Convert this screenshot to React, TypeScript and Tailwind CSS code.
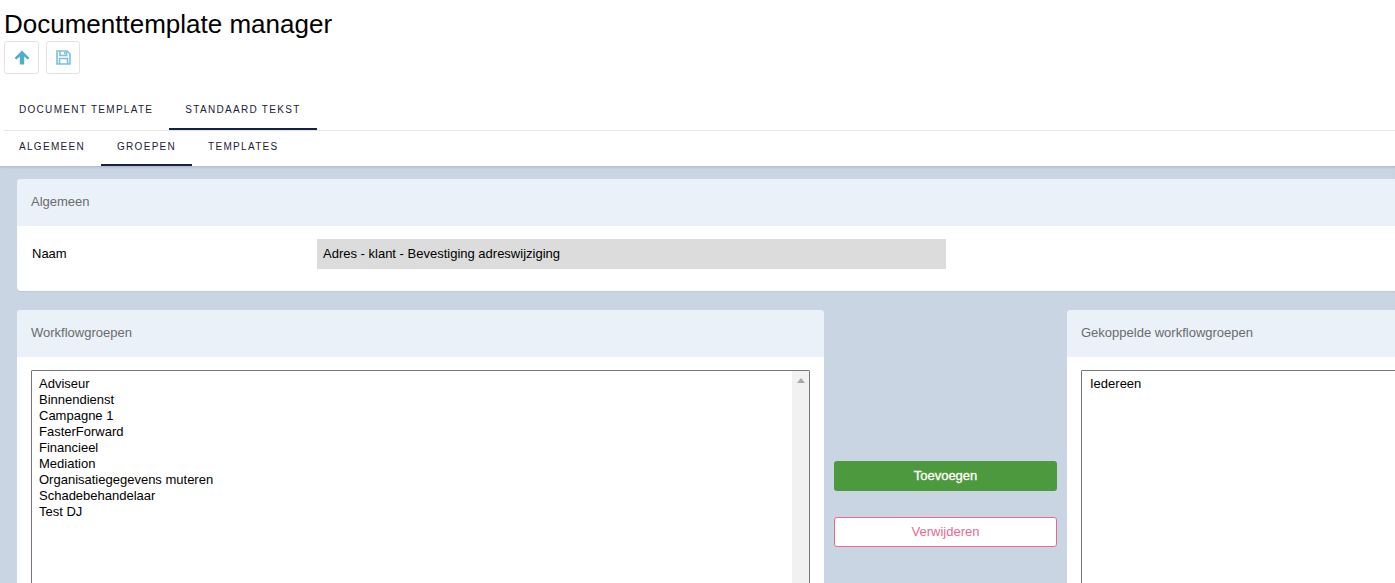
import React from "react";

const groups = ["Adviseur","Binnendienst","Campagne 1","FasterForward","Financieel","Mediation","Organisatiegegevens muteren","Schadebehandelaar","Test DJ"];

function Tab({ label, active, top }: { label: string; active?: boolean; top?: boolean }) {
  return (
    <div className={"flex h-full items-center px-4 text-[10px] tracking-[1.3px] text-[#1a2238] border-b-2 " + (top ? "pt-[1px] " : "pb-[3px] ") + (active ? "border-[#14233f]" : "border-transparent")}>
      {label}
    </div>
  );
}

function PanelHeader({ title }: { title: string }) {
  return (
    <div className="flex h-[47px] items-center rounded-t-[4px] bg-[#eaf1f9] pb-[2px] pl-[14px] text-[13px] text-[#6b6b6b]">{title}</div>
  );
}

export default function App() {
  return (
    <div className="flex h-[583px] w-[1395px] flex-col overflow-hidden bg-white font-['Liberation_Sans',Arial,sans-serif] text-black">
      <div className="h-[90px] shrink-0 pl-[4px]">
        <h1 className="pt-[9px] text-[26px] leading-[30px]">Documenttemplate manager</h1>
        <div className="mt-[2px] flex gap-[7px]">
          <button className="flex h-[33px] w-[35px] items-center justify-center rounded-[3px] border border-[#e3e3e3]">
            <svg width="16" height="15" viewBox="0 0 16 15"><path d="M8 0.5 L15.5 8 L13.5 9.6 L10.2 6.6 L10.2 14.5 L5.8 14.5 L5.8 6.6 L2.5 9.6 L0.5 8 Z" fill="#4fadd0" /></svg>
          </button>
          <button className="flex h-[33px] w-[34px] items-center justify-center rounded-[3px] border border-[#e3e3e3]">
            <svg width="15" height="15" viewBox="0 0 15 15" fill="none" stroke="#7cc0dd" strokeWidth="1.6"><path d="M1 1 H11 L14 4 V14 H1 Z" /><path d="M4 1 V5.5 H10.5 V1" /><path d="M3.5 14 V8.5 H11.5 V14" /><rect x="8" y="2" width="1.4" height="2.4" fill="#7cc0dd" stroke="none" /></svg>
          </button>
        </div>
      </div>
      <div className="ml-[4px] flex h-[41px] shrink-0 border-b border-[#e6e6e6]">
        <div className="-ml-[1px] flex h-full"><Tab top label="DOCUMENT TEMPLATE" /><Tab top label="STANDAARD TEKST" active /></div>
      </div>
      <div className="ml-[4px] flex h-[35px] shrink-0">
        <div className="-ml-[1px] flex h-full"><Tab label="ALGEMEEN" /><Tab label="GROEPEN" active /><Tab label="TEMPLATES" /></div>
      </div>
      <div className="min-h-0 flex-1 bg-[#c9d5e3] pl-[17px] pt-[13px] shadow-[inset_0_3px_3px_-2px_rgba(0,0,0,0.15)]">
        <div className="w-[1400px] rounded-[4px] bg-white shadow-[0_1px_1px_rgba(0,0,0,0.06)]">
          <PanelHeader title="Algemeen" />
          <div className="flex h-[65px] pt-[13px] text-[13px]">
            <div className="w-[300px] pl-[15px] leading-[30px]">Naam</div>
            <div className="flex h-[30px] w-[629px] items-center bg-[#dcdcdc] pl-[6px]">Adres - klant - Bevestiging adreswijziging</div>
          </div>
        </div>
        <div className="mt-[19px] flex">
          <div className="h-[300px] w-[807px] shrink-0 rounded-t-[4px] bg-white">
            <PanelHeader title="Workflowgroepen" />
            <div className="ml-[14px] mt-[13px] flex h-[300px] w-[779px] rounded-[1px] border border-[#767676] text-[13px] leading-[16px]">
              <div className="flex-1 pl-[7px] pt-[5px]">
                {groups.map((g) => <div key={g}>{g}</div>)}
              </div>
              <div className="flex w-[17px] justify-center bg-[#f1f1f1] pt-[7px]">
                <div className="h-0 w-0 border-x-[4px] border-b-[5px] border-x-transparent border-b-[#a8a8a8]" />
              </div>
            </div>
          </div>
          <div className="w-[243px] shrink-0 px-[10px] pt-[151px]">
            <button className="flex h-[30px] w-full items-center justify-center rounded-[3px] bg-[#4c9a3d] text-[13px] text-white [-webkit-text-stroke:0.3px_white]">Toevoegen</button>
            <button className="mt-[26px] flex h-[30px] w-full items-center justify-center rounded-[3px] border border-[#ea6a8f] bg-white text-[13px] text-[#ea6a8f]">Verwijderen</button>
          </div>
          <div className="h-[300px] w-[400px] shrink-0 rounded-t-[4px] bg-white">
            <PanelHeader title="Gekoppelde workflowgroepen" />
            <div className="ml-[14px] mt-[13px] h-[300px] w-[400px] rounded-[1px] border border-[#767676] pl-[8px] pt-[5px] text-[13px] leading-[16px]">Iedereen</div>
          </div>
        </div>
      </div>
    </div>
  );
}
